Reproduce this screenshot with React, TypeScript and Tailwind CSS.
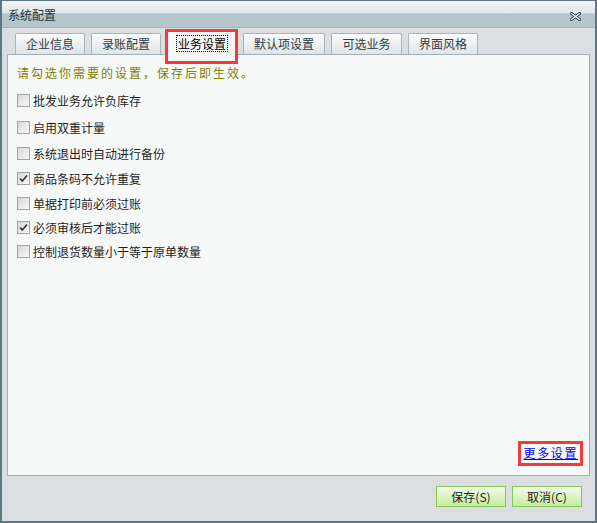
import React from "react";

const tabs = [
  { label: "企业信息", w: "w-[70px]" },
  { label: "录账配置", w: "w-[70px]" },
  { label: "业务设置", w: "w-[70px]", active: true },
  { label: "默认项设置", w: "w-[82px]" },
  { label: "可选业务", w: "w-[71px]" },
  { label: "界面风格", w: "w-[70px]" },
];

const options = [
  { label: "批发业务允许负库存", checked: false, mt: "mt-[13px]" },
  { label: "启用双重计量", checked: false, mt: "mt-[14px]" },
  { label: "系统退出时自动进行备份", checked: false, mt: "mt-[13px]" },
  { label: "商品条码不允许重复", checked: true, mt: "mt-[12px]" },
  { label: "单据打印前必须过账", checked: false, mt: "mt-[12px]" },
  { label: "必须审核后才能过账", checked: true, mt: "mt-[11px]" },
  { label: "控制退货数量小于等于原单数量", checked: false, mt: "mt-[11px]" },
];

function CloseGlyph() {
  return (
    <svg width="11" height="9" viewBox="0 0 11 9">
      <path d="M1.5 1.5 L9.5 7.5 M9.5 1.5 L1.5 7.5" stroke="#3d4a50" strokeWidth="3" strokeLinecap="square" />
      <path d="M1.5 1.5 L9.5 7.5 M9.5 1.5 L1.5 7.5" stroke="#ffffff" strokeWidth="1.2" strokeLinecap="square" />
    </svg>
  );
}

function Checkbox({ checked }: { checked: boolean }) {
  return (
    <span className="flex h-[13px] w-[13px] shrink-0 items-center justify-center border border-[#a3a3a3] bg-[linear-gradient(135deg,#d8d8d8,#f8f8f8)]">
      {checked && (
        <svg width="9" height="9" viewBox="0 0 9 9">
          <path d="M1 4.5 L3.3 7 L8 1.5" fill="none" stroke="#333" strokeWidth="1.6" />
        </svg>
      )}
    </span>
  );
}

export default function App() {
  return (
    <div className="flex h-[523px] w-[597px] flex-col border-2 border-t border-[#5d7880] bg-[#dcdfe2] font-['Noto_Sans_CJK_SC',sans-serif] text-[12px]">
      {/* title bar */}
      <div className="flex h-[27px] shrink-0 items-center justify-between border-b border-[#a3b4b9] bg-[linear-gradient(to_bottom,#f1f4f5_0%,#e2e8ea_45%,#b5c7cc_50%,#b5c7cc_100%)] pl-[6px] pr-[14px]">
        <span className="pt-[2px] leading-none text-[#27343a]">系统配置</span>
        <span className="pt-[4px]">
          <CloseGlyph />
        </span>
      </div>

      <div className="flex flex-1 flex-col px-[5px]">
        {/* tab strip */}
        <div className="mt-[5px] flex h-[21px] items-end gap-[6px] pl-[8px]">
          {tabs.map((t) =>
            t.active ? (
              <div key={t.label} className={`relative z-10 -mb-px flex h-[24px] ${t.w} items-center justify-center bg-[#f7f9f9]`}>
                <span className="border border-dotted border-black px-[1px] leading-[15px] text-black">{t.label}</span>
                <span className="pointer-events-none absolute -left-[2px] -right-[1px] -top-[2px] -bottom-[9px] border-[3px] border-[#f23b3b]" />
              </div>
            ) : (
              <div
                key={t.label}
                className={`flex h-[21px] ${t.w} items-center justify-center rounded-t-[2px] border border-b-0 border-[#aab5bb] bg-[linear-gradient(to_bottom,#fbfcfc,#e0e5e7)] text-[#2c3c46]`}
              >
                {t.label}
              </div>
            )
          )}
        </div>

        {/* panel */}
        <div className="flex h-[422px] flex-col border border-[#9fb0b8] bg-[#f7f9f9] pl-[9px] pr-[11px] pt-[10px] pb-[14px]">
          <div className="leading-[16px] tracking-[2px] text-[#808000]">请勾选你需要的设置，保存后即生效。</div>

          {options.map((o) => (
            <label key={o.label} className={`flex h-[13px] items-center gap-[3px] ${o.mt} text-[#1e1e1e]`}>
              <Checkbox checked={o.checked} />
              <span className="leading-[16px]">{o.label}</span>
            </label>
          ))}

          <div className="flex-1" />
          <div className="flex justify-end">
            <span className="relative leading-[16px] tracking-[1.6px] text-[#0000ee] underline">
              更多设置
              <span className="pointer-events-none absolute -left-[6px] -right-[5px] -top-[4px] -bottom-[5px] border-[3px] border-[#f23b3b]" />
            </span>
          </div>
        </div>

        {/* footer buttons */}
        <div className="mt-[10px] flex justify-end gap-[6px] pr-[8px]">
          <button className="h-[21px] w-[70px] border border-[#85c552] bg-[linear-gradient(to_bottom,#f6fcef,#c4ed9b)] text-[#1e1e1e]">
            保存(S)
          </button>
          <button className="h-[21px] w-[70px] border border-[#85c552] bg-[linear-gradient(to_bottom,#f6fcef,#c4ed9b)] text-[#1e1e1e]">
            取消(C)
          </button>
        </div>
      </div>
    </div>
  );
}
